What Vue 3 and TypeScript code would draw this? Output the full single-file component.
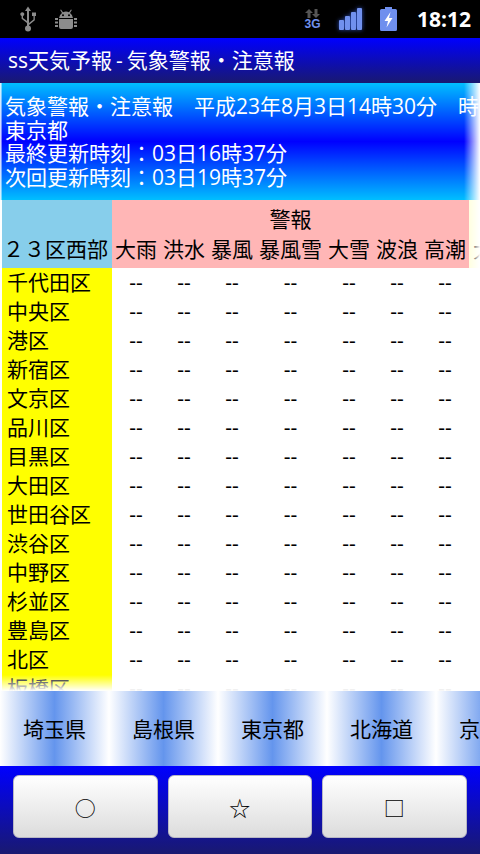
<script setup lang="ts">
const columns: string[] = ['大雨', '洪水', '暴風', '暴風雪', '大雪', '波浪', '高潮']
const wards: string[] = ['千代田区', '中央区', '港区', '新宿区', '文京区', '品川区', '目黒区', '大田区', '世田谷区', '渋谷区', '中野区', '杉並区', '豊島区', '北区', '板橋区']
const tabs: string[] = ['埼玉県', '島根県', '東京都', '北海道', '京都府']
const buttons: string[] = ['○', '☆', '□']
</script>

<template>
  <div class="screen">
    <div class="status">
      <div class="status-left">
        <svg class="usb" width="18" height="26" viewBox="0 0 18 26">
          <path d="M9 0.5 L12 5 H10 V17 L14.5 13.5 V10 H13 V6.5 H17 V10 H15.8 V14.3 L10 19 V21 H8 V17 L2.6 12.8 V10 A2 2 0 1 1 4 10 V12 L8 15 V5 H6 Z" fill="#8c8c8c" />
          <circle cx="9" cy="22.5" r="3" fill="#8c8c8c" />
        </svg>
        <svg class="droid" width="22" height="21" viewBox="0 0 22 21">
          <path d="M6 .5 L8 3.3 A7 7 0 0 1 14 3.3 L16 .5 L16.8 1 L15 4 A7 7 0 0 1 18 9 H4 A7 7 0 0 1 7 4 L5.2 1 Z M4 10 H18 V18 A2 2 0 0 1 16 20 H6 A2 2 0 0 1 4 18 Z" fill="#8c8c8c" />
          <path d="M0 9 H3 V11 H0 Z M0 12.5 H3 V14.5 H0 Z M0 16 H3 V18 H0 Z M19 9 H22 V11 H19 Z M19 12.5 H22 V14.5 H19 Z M19 16 H22 V18 H19 Z" fill="#8c8c8c" />
          <circle cx="8" cy="6.3" r="1" fill="#000" />
          <circle cx="14" cy="6.3" r="1" fill="#000" />
        </svg>
      </div>
      <div class="status-right">
        <div class="net">
          <svg width="15" height="10" viewBox="0 0 15 10">
            <path d="M4 0 L8 4 H5.5 V9 H2.5 V4 H0 Z M11 9 L7 5 H9.5 V0 H12.5 V5 H15 Z" fill="#555" />
          </svg>
          <span class="net-label">3G</span>
        </div>
        <svg class="signal" width="24" height="22" viewBox="0 0 24 22">
          <rect x="0" y="12" width="5" height="10" rx="1" fill="#7191ee" />
          <rect x="6" y="8" width="5" height="14" rx="1" fill="#7191ee" />
          <rect x="12" y="4" width="5" height="18" rx="1" fill="#7191ee" />
          <rect x="18" y="0" width="5" height="22" rx="1" fill="#7191ee" />
        </svg>
        <svg class="battery" width="17" height="24" viewBox="0 0 17 24">
          <path d="M5 0 H12 V2 H15.5 A1.5 1.5 0 0 1 17 3.5 V22.5 A1.5 1.5 0 0 1 15.5 24 H1.5 A1.5 1.5 0 0 1 0 22.5 V3.5 A1.5 1.5 0 0 1 1.5 2 H5 Z" fill="#6f8fee" />
          <path d="M10.5 5 L4.5 14 H8 L6.5 20.5 L12.5 11 H9 Z" fill="#fff" />
        </svg>
        <span class="clock">18:12</span>
      </div>
    </div>

    <div class="title">ss天気予報 - 気象警報・注意報</div>

    <div class="info">
      <div class="info-line">気象警報・注意報　平成23年8月3日14時30分　時点</div>
      <div class="info-line">東京都</div>
      <div class="info-line">最終更新時刻：03日16時37分</div>
      <div class="info-line">次回更新時刻：03日19時37分</div>
      <div class="fade-left"></div>
      <div class="fade-right"></div>
    </div>

    <div class="table-area">
      <div class="head">
        <div class="head-name">２３区西部</div>
        <div class="head-warn">
          <div class="head-group">警報</div>
          <div class="cols">
            <div v-for="c in columns" :key="c" class="col" :class="{ wide: c.length === 3 }">{{ c }}</div>
          </div>
        </div>
        <div class="head-note">
          <div class="head-note-label">大雨</div>
        </div>
      </div>
      <div v-for="w in wards" :key="w" class="row">
        <div class="ward">{{ w }}</div>
        <div class="cols">
          <div v-for="c in columns" :key="c" class="col" :class="{ wide: c.length === 3 }">--</div>
        </div>
      </div>
      <div class="fade-table-left"></div>
      <div class="fade-table-right"></div>
      <div class="fade-bottom"></div>
    </div>

    <div class="tabs">
      <div v-for="t in tabs" :key="t" class="tab">{{ t }}</div>
    </div>

    <div class="actions">
      <button v-for="b in buttons" :key="b" class="action" type="button">{{ b }}</button>
    </div>
  </div>
</template>

<style scoped>
.screen {
  width: 480px;
  height: 854px;
  display: flex;
  flex-direction: column;
  overflow: hidden;
  background: #fff;
  font-family: "Open Sans", "Noto Sans CJK JP", sans-serif;
  font-size: 21px;
  color: #000;
}
.status {
  height: 38px;
  flex: none;
  background: #000;
  display: flex;
  justify-content: space-between;
  align-items: center;
}
.status-left {
  display: flex;
  align-items: center;
  gap: 18px;
  padding-left: 19px;
}
.status-right {
  display: flex;
  align-items: center;
  padding-right: 9px;
}
.net {
  width: 15px;
  display: flex;
  flex-direction: column;
  align-items: center;
  margin-right: 19px;
}
.net-label {
  font-family: "Liberation Sans", sans-serif;
  font-weight: 700;
  font-size: 12px;
  line-height: 11px;
  color: #7191ee;
}
.signal {
  margin-right: 17px;
  filter: drop-shadow(0 0 2px #2f50b8);
}
.battery {
  margin-right: 20px;
}
.clock {
  font-family: "Open Sans", sans-serif;
  font-weight: 700;
  font-size: 21px;
  line-height: 38px;
  color: #fff;
}
.title {
  height: 45px;
  flex: none;
  box-sizing: border-box;
  padding-left: 8px;
  line-height: 45px;
  word-spacing: -1.5px;
  color: #fff;
  background: linear-gradient(#0000ff, #191970);
  white-space: nowrap;
  overflow: hidden;
}
.info {
  position: relative;
  height: 117px;
  flex: none;
  box-sizing: border-box;
  padding: 12px 0 0 5px;
  color: #fff;
  background: linear-gradient(#00bfff, #0000ff 50%, #00bfff);
  overflow: hidden;
}
.info-line {
  line-height: 23.6px;
  white-space: nowrap;
}
.fade-left {
  position: absolute;
  left: 0;
  top: 0;
  bottom: 0;
  width: 2px;
  background: linear-gradient(90deg, #fff, rgba(255, 255, 255, 0.3));
}
.fade-right {
  position: absolute;
  right: 0;
  top: 0;
  bottom: 0;
  width: 16px;
  background: linear-gradient(90deg, rgba(255, 255, 255, 0), #fff);
}
.table-area {
  position: relative;
  flex: 1;
  min-height: 0;
  padding-left: 2px;
  overflow: hidden;
}
.head {
  display: flex;
  height: 68px;
}
.head-name {
  width: 110px;
  flex: none;
  box-sizing: border-box;
  background: #87ceeb;
  padding: 35px 0 0 1px;
  line-height: 29px;
  white-space: nowrap;
  overflow: hidden;
}
.head-warn {
  width: 357px;
  flex: none;
  background: #ffb6b6;
}
.head-group {
  height: 35px;
  line-height: 39px;
  text-align: center;
}
.head-note {
  flex: 1;
  background: #ffffe0;
  overflow: hidden;
}
.head-note-label {
  padding: 35px 0 0 4px;
  line-height: 29px;
  white-space: nowrap;
  color: #000;
}
.cols {
  display: flex;
}
.col {
  width: 48px;
  flex: none;
  text-align: center;
  line-height: 29px;
  white-space: nowrap;
}
.col.wide {
  width: 69px;
}
.row {
  display: flex;
  height: 29px;
}
.ward {
  width: 110px;
  flex: none;
  box-sizing: border-box;
  padding-left: 5px;
  background: #ffff00;
  line-height: 29px;
}
.fade-table-left {
  position: absolute;
  left: 0;
  top: 0;
  bottom: 0;
  width: 2px;
  background: #fff;
}
.fade-table-right {
  position: absolute;
  right: 0;
  top: 0;
  bottom: 0;
  width: 11px;
  background: linear-gradient(90deg, rgba(255, 255, 255, 0), #fff);
}
.fade-bottom {
  position: absolute;
  left: 0;
  right: 0;
  bottom: 0;
  height: 16px;
  background: linear-gradient(rgba(255, 255, 255, 0), #fff);
}
.tabs {
  height: 75px;
  flex: none;
  display: flex;
  overflow: hidden;
}
.tab {
  width: 109px;
  flex: none;
  text-align: center;
  line-height: 76px;
  white-space: nowrap;
  background: linear-gradient(90deg, #fff, #6495ed 50%, #fff);
}
.actions {
  height: 88px;
  flex: none;
  box-sizing: border-box;
  display: flex;
  gap: 10px;
  padding: 9px 13.5px 16px 13px;
  background: linear-gradient(#0000ff, #191970);
}
.action {
  flex: 1;
  min-width: 0;
  padding: 0;
  border: 1px solid #b8b8c4;
  border-radius: 6px;
  background: linear-gradient(#ffffff, #dcdcdc);
  font: inherit;
  font-size: 21px;
  color: #000;
}
</style>

<style>
html, body {
  margin: 0;
  background: #fff;
}
</style>
